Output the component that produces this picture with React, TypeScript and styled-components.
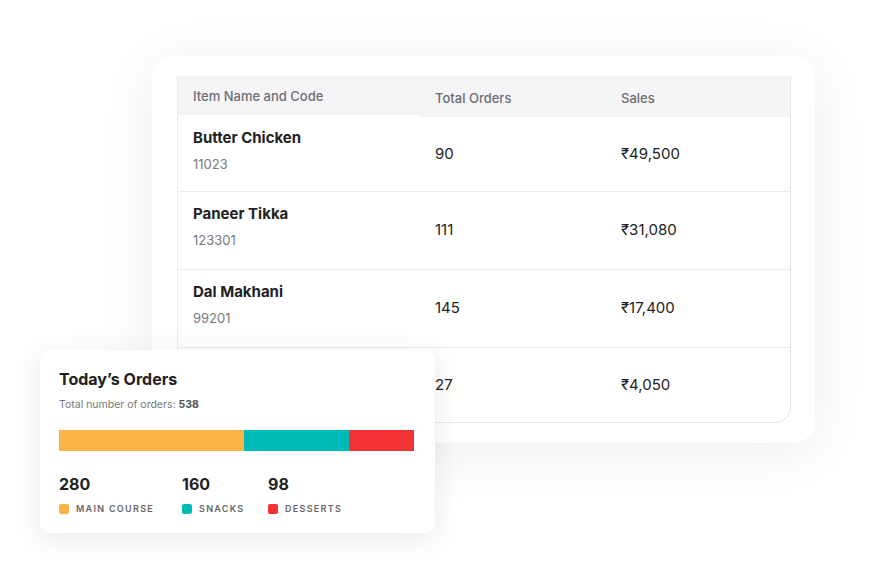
import styled, { createGlobalStyle } from 'styled-components';

const GlobalStyle = createGlobalStyle`
  body {
    margin: 0;
    background: #ffffff;
    font-family: Inter, "Noto Sans", sans-serif;
  }
`;

const Stage = styled.div`
  position: relative;
  width: 877px;
  height: 582px;
  padding: 56px 0 0 152px;
  box-sizing: border-box;
  overflow: hidden;
`;

const TableCard = styled.div`
  width: 663px;
  height: 387px;
  box-sizing: border-box;
  padding: 20px 24px 0 25px;
  background: #fff;
  border-radius: 22px;
  box-shadow: 0 8px 60px rgba(20, 20, 40, 0.07);
`;

const Table = styled.div`
  display: grid;
  grid-template-columns: 242px 186px 1fr;
  border-right: 1px solid #e6e6ea;
  border-bottom: 1px solid #e6e6ea;
  border-left: 1px solid #ececf0;
  border-bottom-right-radius: 16px;
  overflow: hidden;
`;

const HeadCell = styled.div<{ $first?: boolean }>`
  height: 39px;
  display: flex;
  align-items: center;
  padding-left: 15px;
  padding-top: ${p => (p.$first ? '0' : '2px')};
  background: #f5f5f7;
  color: #6d6d75;
  font-size: 13px;
  font-weight: 500;
`;

const Cell = styled.div<{ $h: number; $last?: boolean }>`
  height: ${p => p.$h}px;
  box-sizing: border-box;
  display: flex;
  flex-direction: column;
  justify-content: center;
  padding: 0 0 2px 15px;
  border-bottom: ${p => (p.$last ? 'none' : '1px solid #ececf0')};
  color: #222;
  font-size: 15px;
`;

const Name = styled.div`
  font-weight: 700;
  font-size: 15px;
  color: #222;
  margin-bottom: 9px;
  margin-top: -7px;
`;

const Code = styled.div`
  font-size: 13px;
  color: #7a7a7a;
`;

const OrdersCard = styled.div`
  position: absolute;
  left: 40px;
  top: 350px;
  width: 395px;
  height: 183px;
  box-sizing: border-box;
  padding: 19px 21px 0 19px;
  background: #fff;
  border-radius: 10px;
  box-shadow: 0 6px 30px rgba(20, 20, 40, 0.09);
`;

const Title = styled.div`
  font-size: 16px;
  font-weight: 700;
  color: #222;
`;

const Sub = styled.div`
  margin-top: 9px;
  font-size: 10.5px;
  color: #777;
  b {
    color: #555;
    font-weight: 700;
  }
`;

const Bar = styled.div`
  margin-top: 19px;
  display: flex;
  height: 21px;
`;

const Segment = styled.div<{ $color: string }>`
  background: ${p => p.$color};
`;

const Legend = styled.div`
  margin-top: 23px;
  display: flex;
`;

const LegendItem = styled.div<{ $width: number }>`
  width: ${p => p.$width}px;
`;

const Count = styled.div`
  font-size: 16px;
  font-weight: 700;
  color: #222;
`;

const Label = styled.div<{ $color: string }>`
  margin-top: 9px;
  display: flex;
  align-items: center;
  gap: 7px;
  font-size: 9px;
  font-weight: 600;
  letter-spacing: 1.3px;
  color: #666;
  &::before {
    content: '';
    width: 10px;
    height: 10px;
    border-radius: 2px;
    background: ${p => p.$color};
  }
`;

const rows = [
  { name: 'Butter Chicken', code: '11023', orders: '90', sales: '₹49,500', h: 75 },
  { name: 'Paneer Tikka', code: '123301', orders: '111', sales: '₹31,080', h: 78 },
  { name: 'Dal Makhani', code: '99201', orders: '145', sales: '₹17,400', h: 78 },
  { name: '', code: '', orders: '27', sales: '₹4,050', h: 74 },
];

const segments = [
  { color: '#fdb447', value: 280, label: 'MAIN COURSE', width: 123 },
  { color: '#00bcb9', value: 160, label: 'SNACKS', width: 86 },
  { color: '#f33333', value: 98, label: 'DESSERTS', width: 100 },
];

export default function App() {
  const total = segments.reduce((s, x) => s + x.value, 0);
  return (
    <Stage>
      <GlobalStyle />
      <TableCard>
        <Table>
          <HeadCell $first>Item Name and Code</HeadCell>
          <HeadCell>Total Orders</HeadCell>
          <HeadCell>Sales</HeadCell>
          {rows.map((r, i) => {
            const last = i === rows.length - 1;
            return [
              <Cell key={`n${i}`} $h={r.h} $last={last}>
                {r.name && <Name>{r.name}</Name>}
                {r.code && <Code>{r.code}</Code>}
              </Cell>,
              <Cell key={`o${i}`} $h={r.h} $last={last}>{r.orders}</Cell>,
              <Cell key={`s${i}`} $h={r.h} $last={last}>{r.sales}</Cell>,
            ];
          })}
        </Table>
      </TableCard>

      <OrdersCard>
        <Title>Today’s Orders</Title>
        <Sub>
          Total number of orders: <b>{total}</b>
        </Sub>
        <Bar>
          {segments.map(s => (
            <Segment
              key={s.label}
              $color={s.color}
              style={{ width: `${(s.value / total) * 100}%` }}
            />
          ))}
        </Bar>
        <Legend>
          {segments.map(s => (
            <LegendItem key={s.label} $width={s.width}>
              <Count>{s.value}</Count>
              <Label $color={s.color}>{s.label}</Label>
            </LegendItem>
          ))}
        </Legend>
      </OrdersCard>
    </Stage>
  );
}
